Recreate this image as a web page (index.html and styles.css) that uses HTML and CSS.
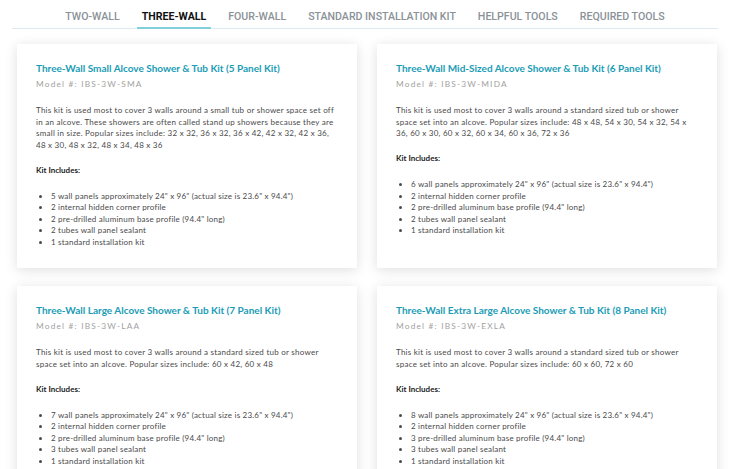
FILE: index.html
```html
<!DOCTYPE html>
<html lang="en">
<head>
<meta charset="utf-8">
<title>Three-Wall Kits</title>
<link rel="stylesheet" href="styles.css">
</head>
<body>
<nav class="tabs">
  <a class="tab">Two-Wall</a>
  <a class="tab active">Three-Wall</a>
  <a class="tab">Four-Wall</a>
  <a class="tab">Standard Installation Kit</a>
  <a class="tab">Helpful Tools</a>
  <a class="tab">Required Tools</a>
</nav>
<main class="grid">
  <section class="card">
    <h2 class="title">Three-Wall Small Alcove Shower &amp; Tub Kit (5 Panel Kit)</h2>
    <p class="model">Model #: IBS-3W-SMA</p>
    <p class="desc">This kit is used most to cover 3 walls around a small tub or shower space set off in an alcove. These showers are often called stand up showers because they are small in size. Popular sizes include: 32 x 32, 36 x 32, 36 x 42, 42 x 32, 42 x 36, 48 x 30, 48 x 32, 48 x 34, 48 x 36</p>
    <p class="inc">Kit Includes:</p>
    <ul class="list">
      <li>5 wall panels approximately 24" x 96" (actual size is 23.6" x 94.4")</li>
      <li>2 internal hidden corner profile</li>
      <li>2 pre-drilled aluminum base profile (94.4" long)</li>
      <li>2 tubes wall panel sealant</li>
      <li>1 standard installation kit</li>
    </ul>
  </section>
  <section class="card">
    <h2 class="title">Three-Wall Mid-Sized Alcove Shower &amp; Tub Kit (6 Panel Kit)</h2>
    <p class="model">Model #: IBS-3W-MIDA</p>
    <p class="desc">This kit is used most to cover 3 walls around a standard sized tub or shower space set into an alcove. Popular sizes include: 48 x 48, 54 x 30, 54 x 32, 54 x 36, 60 x 30, 60 x 32, 60 x 34, 60 x 36, 72 x 36</p>
    <p class="inc">Kit Includes:</p>
    <ul class="list">
      <li>6 wall panels approximately 24" x 96" (actual size is 23.6" x 94.4")</li>
      <li>2 internal hidden corner profile</li>
      <li>2 pre-drilled aluminum base profile (94.4" long)</li>
      <li>2 tubes wall panel sealant</li>
      <li>1 standard installation kit</li>
    </ul>
  </section>
  <section class="card">
    <h2 class="title">Three-Wall Large Alcove Shower &amp; Tub Kit (7 Panel Kit)</h2>
    <p class="model">Model #: IBS-3W-LAA</p>
    <p class="desc">This kit is used most to cover 3 walls around a standard sized tub or shower space set into an alcove. Popular sizes include: 60 x 42, 60 x 48</p>
    <p class="inc">Kit Includes:</p>
    <ul class="list">
      <li>7 wall panels approximately 24" x 96" (actual size is 23.6" x 94.4")</li>
      <li>2 internal hidden corner profile</li>
      <li>2 pre-drilled aluminum base profile (94.4" long)</li>
      <li>3 tubes wall panel sealant</li>
      <li>1 standard installation kit</li>
    </ul>
  </section>
  <section class="card">
    <h2 class="title">Three-Wall Extra Large Alcove Shower &amp; Tub Kit (8 Panel Kit)</h2>
    <p class="model">Model #: IBS-3W-EXLA</p>
    <p class="desc">This kit is used most to cover 3 walls around a standard sized tub or shower space set into an alcove. Popular sizes include: 60 x 60, 72 x 60</p>
    <p class="inc">Kit Includes:</p>
    <ul class="list">
      <li>8 wall panels approximately 24" x 96" (actual size is 23.6" x 94.4")</li>
      <li>2 internal hidden corner profile</li>
      <li>3 pre-drilled aluminum base profile (94.4" long)</li>
      <li>3 tubes wall panel sealant</li>
      <li>1 standard installation kit</li>
    </ul>
  </section>
</main>
</body>
</html>
```
FILE: styles.css
```css
html, body {
  margin: 0;
  padding: 0;
  background: #ffffff;
}
body {
  font-family: "Lato", "Noto Sans", sans-serif;
  color: #444;
  overflow: hidden;
}
.tabs {
  display: flex;
  justify-content: center;
  gap: 12px;
  margin: 0 17px 0 12px;
  height: 28px;
  border-bottom: 1px solid #dcebee;
}
.tab {
  display: flex;
  align-items: center;
  padding: 5px 5px 0;
  font-family: "Roboto", sans-serif;
  font-weight: 500;
  font-size: 10.6px;
  text-transform: uppercase;
  color: #8a9298;
  border-bottom: 2px solid transparent;
  margin-bottom: -1px;
}
.tab.active {
  color: #111;
  font-weight: 700;
  border-bottom-color: #7fd0db;
}
.grid {
  display: grid;
  grid-template-columns: 340px 340px;
  column-gap: 20px;
  row-gap: 18px;
  padding: 15px 18px 20px 17px;
}
.card {
  background: #fff;
  box-shadow: 0 2px 12px rgba(0, 0, 0, 0.13);
  padding: 17px 19px 20px 19px;
}
.title {
  margin: 0;
  font-family: "Lato", sans-serif;
  font-weight: 700;
  font-size: 10px;
  line-height: 14px;
  color: #1a9cb6;
}
.model {
  margin: 3px 0 0;
  font-size: 8.3px;
  line-height: 12px;
  letter-spacing: 1.2px;
  color: #a2a2a2;
}
.desc {
  margin: 15px 0 0;
  font-size: 8px;
  line-height: 11.5px;
  letter-spacing: 0.25px;
  color: #4a4a4a;
}
.inc {
  margin: 13.5px 0 0;
  font-size: 8px;
  line-height: 11.5px;
  font-weight: 700;
  color: #222;
}
.list {
  margin: 14.5px 0 0;
  padding-left: 15px;
  font-size: 8px;
  line-height: 11.5px;
  letter-spacing: 0.2px;
  color: #4a4a4a;
}
```
